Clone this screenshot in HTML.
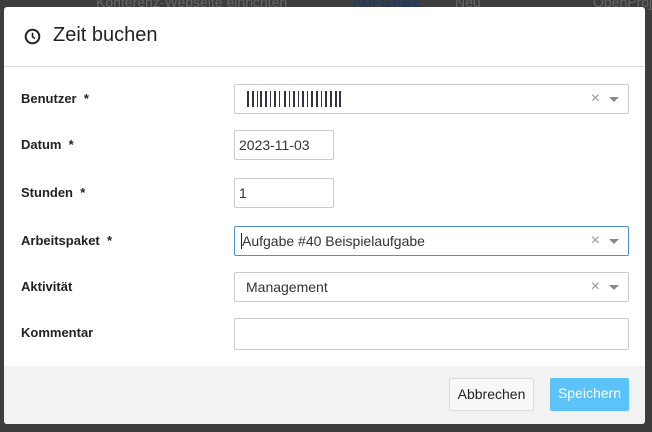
<!DOCTYPE html>
<html><head><meta charset="utf-8"><style>
*{box-sizing:border-box;margin:0;padding:0}
body{width:652px;height:432px;background:#3d3d3d;font-family:"Liberation Sans",sans-serif;position:relative;overflow:hidden}
.bgtext{position:absolute;top:-6px;font-size:14px;color:#666}
.modal{position:absolute;left:4px;top:7px;width:641px;height:417px;background:#fff;border-radius:3px;overflow:hidden}
.hdr{height:60px;border-bottom:1px solid #ddd;position:relative}
.hdr h1{position:absolute;left:49px;top:17px;font-size:20px;font-weight:normal;color:#222}
.lbl{position:absolute;left:17px;font-size:13px;font-weight:bold;color:#222}
.inp{position:absolute;left:230px;border:1px solid #ccc;border-radius:2px;height:30px;font-size:14px;color:#333;padding-left:4px;line-height:28px;background:#fff}
.sel{width:395px;padding-left:11px}
.x{position:absolute;right:28px;top:0;color:#999;font-size:16px}
.car{position:absolute;right:9px;top:12px;width:0;height:0;border-left:5px solid transparent;border-right:5px solid transparent;border-top:5px solid #888}
.ftr{position:absolute;left:0;bottom:0;width:100%;height:58px;background:#f2f2f2}
.btn{position:absolute;top:12px;height:33px;font-size:14px;line-height:31px;text-align:center;border-radius:2px}
</style></head><body>
<div class="bgtext" style="left:96px">Konferenz-Webseite einrichten</div>
<div class="bgtext" style="left:352px;color:#1a3a6a;font-weight:bold">AUFGABE</div>
<div class="bgtext" style="left:455px">Neu</div>
<div class="bgtext" style="left:593px">OpenProj</div>
<div class="modal">
 <div class="hdr">
  <svg style="position:absolute;left:20px;top:21px" width="17" height="17" viewBox="0 0 17 17"><circle cx="8.5" cy="8.5" r="6.8" fill="none" stroke="#222" stroke-width="2"/><path d="M8.5 4.8V8.8L11 10.5" fill="none" stroke="#222" stroke-width="1.6"/></svg>
  <h1>Zeit buchen</h1>
 </div>
 <div class="lbl" style="top:84px">Benutzer&nbsp; *</div>
 <div class="inp sel" style="top:77px">
  <svg style="position:absolute;left:12px;top:6px" width="95" height="16" viewBox="0 0 95 16" fill="#334"><rect x="0" width="2" height="16"/><rect x="5" width="2" height="16"/><rect x="10" width="1" height="16"/><rect x="13" width="2" height="16"/><rect x="18" width="2" height="16"/><rect x="23" width="1" height="16"/><rect x="27" width="2" height="16"/><rect x="32" width="1" height="16"/><rect x="37" width="2" height="16"/><rect x="42" width="1" height="16"/><rect x="46" width="2" height="16"/><rect x="51" width="1" height="16"/><rect x="55" width="2" height="16"/><rect x="60" width="1" height="16"/><rect x="64" width="2" height="16"/><rect x="69" width="2" height="16"/><rect x="74" width="1" height="16"/><rect x="78" width="2" height="16"/><rect x="83" width="2" height="16"/><rect x="88" width="2" height="16"/><rect x="92" width="2" height="16"/></svg>
  <span class="x">×</span><span class="car"></span></div>
 <div class="lbl" style="top:130px">Datum&nbsp; *</div>
 <div class="inp" style="top:123px;width:100px">2023-11-03</div>
 <div class="lbl" style="top:178px">Stunden&nbsp; *</div>
 <div class="inp" style="top:171px;width:100px">1</div>
 <div class="lbl" style="top:226px">Arbeitspaket&nbsp; *</div>
 <div class="inp sel" style="top:219px;border-color:#4a90d9;padding-left:6px"><span style="border-left:1px solid #222">Aufgabe #40 Beispielaufgabe</span><span class="x">×</span><span class="car"></span></div>
 <div class="lbl" style="top:272px">Aktivität</div>
 <div class="inp sel" style="top:265px">Management<span class="x">×</span><span class="car"></span></div>
 <div class="lbl" style="top:318px">Kommentar</div>
 <div class="inp" style="top:311px;width:395px;height:32px"></div>
 <div class="ftr">
  <div class="btn" style="left:445px;width:85px;background:#f8f8f8;border:1px solid #ddd;color:#222">Abbrechen</div>
  <div class="btn" style="left:546px;width:79px;background:#5bc2fa;color:#fff">Speichern</div>
 </div>
</div>
</body></html>
